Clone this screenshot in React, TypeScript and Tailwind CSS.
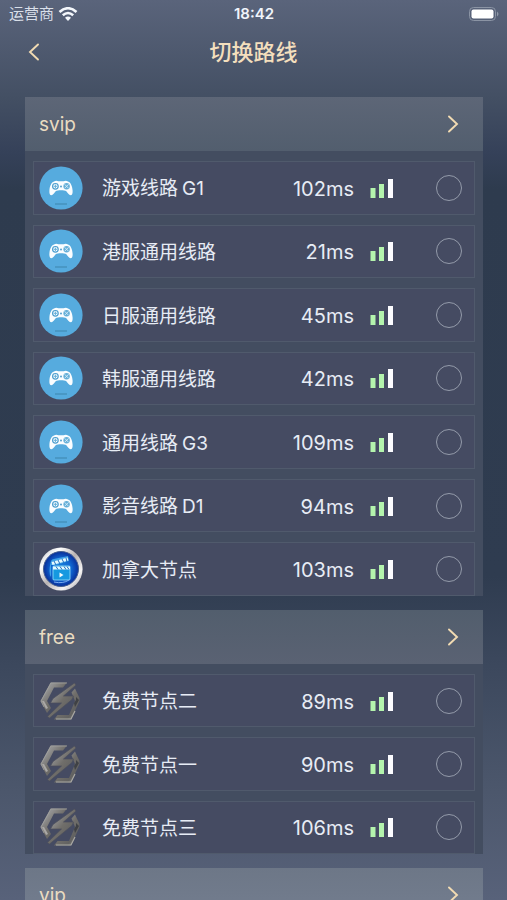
import { useState } from "react";

type Kind = "game" | "film" | "bolt";
type Line = { name: string; suffix?: string; ms: number; kind: Kind };
type Group = { title: string; body: string; head: string; lines: Line[] };

const groups: Group[] = [
  {
    title: "svip",
    head: "bg-linear-to-b from-[#5d6677] to-[#525e6e]",
    body: "min-h-[445px]",
    lines: [
      { name: "游戏线路", suffix: "G1", ms: 102, kind: "game" },
      { name: "港服通用线路", ms: 21, kind: "game" },
      { name: "日服通用线路", ms: 45, kind: "game" },
      { name: "韩服通用线路", ms: 42, kind: "game" },
      { name: "通用线路", suffix: "G3", ms: 109, kind: "game" },
      { name: "影音线路", suffix: "D1", ms: 94, kind: "game" },
      { name: "加拿大节点", ms: 103, kind: "film" },
    ],
  },
  {
    title: "free",
    head: "bg-linear-to-b from-[#525e6d] to-[#5a6273]",
    body: "min-h-[190px]",
    lines: [
      { name: "免费节点二", ms: 89, kind: "bolt" },
      { name: "免费节点一", ms: 90, kind: "bolt" },
      { name: "免费节点三", ms: 106, kind: "bolt" },
    ],
  },
  { title: "vip", head: "bg-linear-to-b from-[#6d7787] to-[#747e90]", body: "", lines: [] },
];

function GameIcon() {
  return (
    <svg viewBox="0 0 44 44" className="size-11 shrink-0" aria-hidden="true">
      <circle cx="22" cy="22" r="21.6" fill="#56abde" />
      <path
        d="M15 15.500c1.500-1 3.200-.8 4.400-.2h5.200c1.200-.6 2.900-.8 4.400.2 2.700.8 4.200 4.600 4.600 9 .2 2.800-.4 4.800-2 4.800-1.700 0-2.800-2.300-4.500-4.200-1.600-1.200-8.600-1.200-10.200 0-1.700 1.900-2.800 4.200-4.500 4.200-1.600 0-2.200-2-2-4.800.4-4.400 1.900-8.200 4.600-9Z"
        fill="#fafdff"
      />
      <circle cx="16.400" cy="20.300" r="2.800" fill="none" stroke="#4b9dce" strokeWidth="1.200" />
      <path d="M16.400 18.600v3.400M14.700 20.300h3.400" stroke="#64afd9" strokeWidth="1" />
      <circle cx="27.600" cy="20.300" r="3.200" fill="#65afd8" />
      <path d="M25.600 18.300l4 4M29.600 18.300l-4 4" stroke="#e3f3fb" strokeWidth=".8" />
      <circle cx="22" cy="20.500" r=".9" fill="#4598ca" />
      <path d="M16 38h12" stroke="#438fb9" strokeWidth="1.300" />
    </svg>
  );
}

function FilmIcon() {
  return (
    <svg viewBox="0 0 44 44" className="size-11 shrink-0" aria-hidden="true">
      <defs>
        <linearGradient id="rim" x1="0" y1="0" x2="1" y2="1">
          <stop stopColor="#b1b3b7" />
          <stop offset=".25" stopColor="#fff" />
          <stop offset=".5" stopColor="#b9b3b2" />
          <stop offset=".75" stopColor="#f7f5f5" />
          <stop offset="1" stopColor="#8e8c92" />
        </linearGradient>
        <radialGradient id="disc">
          <stop stopColor="#1688df" />
          <stop offset=".6" stopColor="#1065d0" />
          <stop offset="1" stopColor="#092e99" />
        </radialGradient>
      </defs>
      <circle cx="22" cy="22" r="21.600" fill="url(#rim)" />
      <circle cx="22" cy="22" r="17.500" fill="url(#disc)" stroke="#47618f" />
      <path d="M12 14q1-2 3-2l14-3 1 5-13 4H12v12q-3-4 0-16" fill="#4fb7ef" opacity=".75" />
      <rect x="14" y="19" width="17" height="14" rx="1" fill="#1599e0" stroke="#9be1fa" strokeWidth=".8" />
      <path d="M13 16.500 29 12M14 21h17" stroke="#e4faff" strokeWidth="3" />
      <path d="m15 14 2 4m2-5 2 4m2-5 2 4m2-5 1 4M17 19.500l2 3m2-3 2 3m2-3 2 3m1-3 2 3" stroke="#1f6cc2" strokeWidth="1" />
      <path d="m20.500 25.500 4 2.500-4 2.500Z" fill="#f5fdff" />
      <path d="M15 35q9 2 15-2" fill="none" stroke="#7aaaf0" strokeWidth="1" />
    </svg>
  );
}

function BoltIcon() {
  return (
    <svg viewBox="0 0 44 44" className="size-11 shrink-0" aria-hidden="true">
      <defs>
        <linearGradient id="steel" x1="0" y1="0" x2="1" y2="1">
          <stop stopColor="#71767a" />
          <stop offset=".25" stopColor="#929292" />
          <stop offset=".5" stopColor="#706e6a" />
          <stop offset=".75" stopColor="#626261" />
          <stop offset="1" stopColor="#9a9b97" />
        </linearGradient>
      </defs>
      <path d="M28 3.500H11.500L1.500 22 8 34l4-5-4-7 7-13.500h9Z" fill="url(#steel)" />
      <path d="m36 9.500 4.500 9.500v3L32 40.500H15l3.500-4.500H30l6-14-3.500-8.500Z" fill="url(#steel)" />
      <path d="M35.500 4 14 19.500 11.500 24h11L8.500 37.500l2 1.500L33 20.500l1.500-3.500H24.500L37 6Z" fill="url(#steel)" stroke="#4c4f5b" strokeWidth=".7" />
      <path d="M28 4H12L2 22l3 6" fill="none" stroke="#a2a2a0" strokeWidth=".8" />
      <path d="M17 40h15l4-8" fill="none" stroke="#aaa9a4" strokeWidth="1.200" />
      <path d="m3 22 4 8 2-1-4-7" fill="#aaa8a6" />
      <path d="m37 18 3 3-4 7-1-4 2-3Z" fill="#3f4145" />
    </svg>
  );
}

function Chevron({ left = false }: { left?: boolean }) {
  return (
    <svg viewBox="0 0 12 20" className="h-5 w-3" fill="none" stroke="#f2dbb2" strokeWidth="1.900" strokeLinecap="round" aria-hidden="true">
      <path d={left ? "M10 2.500 2 10l8 7.500" : "m2 2.500 8 7.500-8 7.500"} />
    </svg>
  );
}

function Signal() {
  return (
    <svg viewBox="0 0 24 20" className="h-5 w-6 shrink-0" role="img" aria-label="信号">
      <path d="M0.500 10h5v10h-5ZM9 6h5v14H9Z" fill="#b4f4ad" />
      <path d="M18 1h5v19h-5Z" fill="#fcfcff" />
    </svg>
  );
}

const icons = { game: GameIcon, film: FilmIcon, bolt: BoltIcon };

export default function App() {
  const [selected, setSelected] = useState("");
  return (
    <div className="flex h-screen flex-col overflow-hidden bg-[linear-gradient(to_bottom,#5a647b_0%,#434f63_11%,#354159_17%,#2e3b4e_21%,#2f3c50_64%,#3c485d_74%,#4c576c_88%,#58627a_100%)] font-['Inter','Noto_Sans_CJK_SC',sans-serif]">
      <div className="grid h-7 shrink-0 grid-cols-3 items-center pr-2 pl-[9px] text-[#f0f4fb]">
        <div className="flex items-center gap-1 text-[15px] text-[#d9dfe9]">
          <span>运营商</span>
          <svg viewBox="0 0 20 14" className="h-3.5 w-5" fill="none" stroke="#f5f8fc" strokeWidth="2.600" aria-hidden="true">
            <path d="M1.500 5q8.500-7.500 17 0M4.800 8.300q5.200-4.600 10.400 0" />
            <path d="m7 10.800q3-2.500 6 0L10 14Z" fill="#f5f8fc" stroke="none" />
          </svg>
        </div>
        <time className="text-center text-[15px] font-semibold">18:42</time>
        <svg viewBox="0 0 30 14" className="h-3.5 w-[30px] justify-self-end" aria-label="电量" role="img">
          <rect x=".5" y=".5" width="26" height="13" rx="4" fill="none" stroke="#8b94a4" />
          <rect x="2.500" y="2.500" width="22" height="9" rx="2" fill="#fff" />
          <path d="M28 4.500q3 2.500 0 5Z" fill="#9099a8" />
        </svg>
      </div>
      <header className="grid h-12 shrink-0 grid-cols-[1fr_auto_1fr] items-center px-7">
        <button type="button" aria-label="返回" className="w-3">
          <Chevron left />
        </button>
        <h1 className="text-[22px] font-medium text-[#f4dfbd]">切换路线</h1>
      </header>
      <main className="mt-[21px] mr-6 ml-[25px] flex flex-col gap-3.5">
        {groups.map((group) => (
          <section key={group.title} className="shrink-0">
            <button
              type="button"
              className={"flex h-[54px] w-full items-center justify-between pr-6 pl-3.5 text-[19px] text-[#eadcc1] " + group.head}
            >
              <span className="pt-0.5">{group.title}</span>
              <Chevron />
            </button>
            {group.lines.length > 0 && (
              <div className={"grid auto-rows-fr gap-2.5 bg-[#434d60] px-2 pt-2.5 " + group.body}>
                {group.lines.map((line) => {
                  const Icon = icons[line.kind];
                  return (
                    <label key={line.name} className="flex items-center border border-[#505a6c] bg-[#454b62] pr-3 pl-[5px] text-xl text-[#e7ecf5]">
                      <Icon />
                      <span className="ml-[19px] flex flex-1 gap-1 pt-1 text-[19px]">
                        {line.name}
                        {line.suffix && <span>{line.suffix}</span>}
                      </span>
                      <span className="mr-4 pt-0.5">{line.ms}ms</span>
                      <Signal />
                      <input
                        type="radio"
                        name="line"
                        checked={selected === line.name}
                        onChange={() => setSelected(line.name)}
                        className="ml-[42px] size-[26px] appearance-none rounded-full border border-[#949baa] checked:border-8 checked:border-[#f2dbb2]"
                      />
                    </label>
                  );
                })}
              </div>
            )}
          </section>
        ))}
      </main>
    </div>
  );
}
